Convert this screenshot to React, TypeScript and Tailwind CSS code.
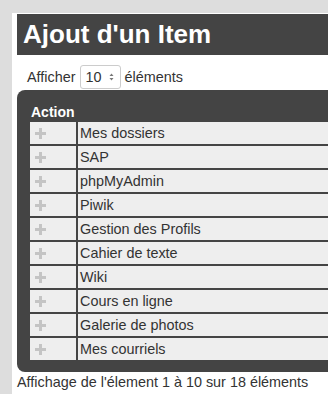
import React from "react";

const items = [
  "Mes dossiers",
  "SAP",
  "phpMyAdmin",
  "Piwik",
  "Gestion des Profils",
  "Cahier de texte",
  "Wiki",
  "Cours en ligne",
  "Galerie de photos",
  "Mes courriels",
];

function PlusIcon() {
  return (
    <svg width="11" height="11" viewBox="0 0 11 11">
      <rect x="4" y="0" width="3" height="11" fill="#c4c4c4" />
      <rect x="0" y="4" width="11" height="3" fill="#c4c4c4" />
    </svg>
  );
}

export default function App() {
  return (
    <div
      className="w-[328px] h-[394px] overflow-hidden bg-[#dddddd] pl-[12px] pt-[13px] text-[#333]"
      style={{ fontFamily: '"Liberation Sans", Arial, sans-serif' }}
    >
      <div className="w-[420px] h-[400px] bg-white pl-[5px] pt-[1px]">
        {/* title */}
        <div className="h-[41px] bg-[#444] pl-[6px] text-[26px] font-bold leading-[41px] text-white">
          Ajout d'un Item
        </div>

        {/* length select */}
        <div className="mt-[10px] flex items-center pl-[10px] text-[14.4px] leading-[24px]">
          <span>Afficher</span>
          <div className="ml-[4px] flex h-[24px] w-[41px] items-center justify-between rounded-[3px] border border-[#ccc] bg-white pl-[5px] pr-[5px]">
            <span>10</span>
            <svg width="7" height="12" viewBox="0 0 7 12">
              <path d="M3.5 2.5 L5.5 5 L1.5 5 Z" fill="#777" />
              <path d="M3.5 9.5 L5.5 7 L1.5 7 Z" fill="#777" />
            </svg>
          </div>
          <span className="ml-[4px]">éléments</span>
        </div>

        {/* table */}
        <div className="mt-[1px] rounded-l-[8px] bg-[#444] pb-[12px] pl-[13px] pt-[12px]">
          <div className="pl-[1px] text-[14px] font-bold leading-[20px] text-white">Action</div>
          <div className="flex flex-col gap-[2px]">
            {items.map((name) => (
              <div key={name} className="flex h-[22px] gap-[2px]">
                <div className="flex w-[46px] items-center bg-[#eee] pl-[5px]">
                  <PlusIcon />
                </div>
                <div className="flex-1 bg-[#eee] pl-[2px] text-[14.4px] leading-[23px]">{name}</div>
              </div>
            ))}
          </div>
        </div>

        <div className="text-[14.4px] leading-[21px]">Affichage de l'élement 1 à 10 sur 18 éléments</div>
      </div>
    </div>
  );
}
